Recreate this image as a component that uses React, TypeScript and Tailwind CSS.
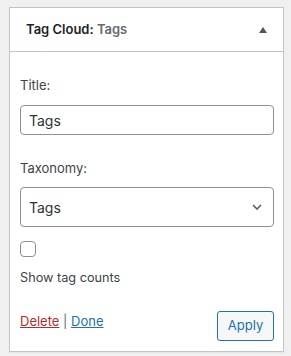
import React from "react";

export default function App() {
  const font = { fontFamily: "Inter, 'Liberation Sans', Arial, sans-serif" };
  return (
    <div className="w-[291px] h-[356px] bg-[#f0f0f1] pt-[7px] pl-[9px]" style={font}>
      <div className="w-[275px] h-[345px] border border-[#c3c4c7] bg-white shadow-[0_1px_1px_rgba(0,0,0,0.04)] flex flex-col">
        <div className="h-[44px] border-b border-[#c3c4c7] flex items-center justify-between pl-[16px] pr-[16px]">
          <div className="text-[13px] font-semibold text-[#1d2327] leading-none">
            Tag Cloud: <span className="text-[#646970]">Tags</span>
          </div>
          <svg width="8" height="6" viewBox="0 0 8 6">
            <polygon points="4,0 8,6 0,6" fill="#50575e" />
          </svg>
        </div>
        <div className="flex flex-col pl-[10px] pr-[9px] pt-[24px] text-[13px] text-[#3c434a]">
          <label className="h-[18px] leading-[18px]">Title:</label>
          <div className="mt-[11px] h-[30px] border border-[#8c8f94] rounded-[4px] flex items-center px-[8px] text-[14px] text-[#2c3338]">
            Tags
          </div>
          <label className="mt-[24px] h-[18px] leading-[18px]">Taxonomy:</label>
          <div className="mt-[10px] h-[40px] border border-[#8c8f94] rounded-[4px] flex items-center justify-between pl-[8px] pr-[11px] text-[14px] text-[#2c3338]">
            <span>Tags</span>
            <svg width="10" height="6" viewBox="0 0 10 6">
              <polyline points="1,1 5,5 9,1" fill="none" stroke="#50575e" strokeWidth="1.5" />
            </svg>
          </div>
          <div className="mt-[14px] w-[16px] h-[16px] border border-[#8c8f94] rounded-[4px] bg-white" />
          <div className="mt-[12px] h-[18px] leading-[18px] text-[12.7px]">Show tag counts</div>
          <div className="mt-[24px] flex justify-between items-start">
            <div className="pt-[1px] leading-[18px]">
              <span className="text-[#b32d2e] underline">Delete</span>
              <span className="text-[#646970]"> | </span>
              <span className="text-[#2271b1] underline">Done</span>
            </div>
            <button className="w-[57px] h-[30px] border border-[#2271b1] rounded-[3px] bg-[#f6f7f7] text-[#2271b1] text-[13px] flex items-center justify-center">
              Apply
            </button>
          </div>
        </div>
      </div>
    </div>
  );
}
